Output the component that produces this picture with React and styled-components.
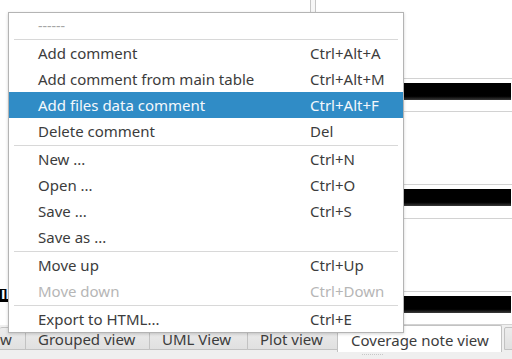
import React from "react";
import styled, { createGlobalStyle } from "styled-components";

const GlobalStyle = createGlobalStyle`
  html, body { margin: 0; padding: 0; background: #ffffff; }
  body { font-family: "Noto Sans", "Open Sans", sans-serif; color: #3c3c3c; }
  #root { width: 512px; height: 359px; overflow: hidden; }
`;

const Window = styled.div`
  position: relative;
  width: 512px;
  height: 359px;
  display: flex;
  flex-direction: column;
  background: #ffffff;
  overflow: hidden;
`;

const Main = styled.div`
  height: 325px;
  display: flex;
  background: #ffffff;
`;

const LeftPane = styled.div`
  width: 310px;
  display: flex;
  flex-direction: column;
  padding-top: 289px;
  box-sizing: border-box;
`;

const HeaderStrip = styled.div`
  height: 13px;
  background: #000;
  color: #fff;
  font-family: "DejaVu Sans", sans-serif;
  font-weight: bold;
  font-size: 12px;
  line-height: 13px;
  padding-left: 1px;
  white-space: nowrap;
  overflow: hidden;
`;

const Splitter = styled.div`
  width: 4px;
  border-left: 1px solid #c6c6c6;
  border-right: 1px solid #c6c6c6;
  background: #f7f7f7;
`;

const RightPane = styled.div`
  flex: 1;
  display: flex;
  flex-direction: column;
  gap: 72px;
  padding-top: 78px;
`;

const Block = styled.div`
  height: 30px;
  border-top: 1px solid #d2d2d2;
  border-bottom: 1px solid #d2d2d2;
  padding: 4px 1px 0 0;
  box-sizing: content-box;
`;

const BlackBar = styled.div`
  height: 17px;
  background: linear-gradient(to bottom, #000 0%, #000 78%, #3a3a3a 100%);
`;

const TabBar = styled.div`
  height: 34px;
  display: flex;
  align-items: flex-start;
  background: #efefef;
  position: relative;
`;

const Tab = styled.div`
  box-sizing: border-box;
  height: ${(p) => (p.$active ? "27px" : "23px")};
  margin-top: ${(p) => (p.$active ? "0" : "2px")};
  padding: ${(p) => (p.$active ? "2px 10px 0 13px" : "0 10px 0 12px")};
  display: flex;
  align-items: center;
  width: ${(p) => (p.$w ? `${p.$w}px` : "auto")};
  overflow: hidden;
  flex-shrink: 0;
  white-space: nowrap;
  font-size: 15px;
  color: #3c3c3c;
  background: ${(p) => (p.$active ? "#ffffff" : "linear-gradient(#ececec, #e0e0e0)")};
  border: 1px solid #c2c2c2;
  border-bottom: ${(p) => (p.$active ? "none" : "1px solid #c2c2c2")};
  margin-right: ${(p) => (p.$active ? "2px" : "-1px")};
  border-radius: 2px 2px 0 0;
`;

const ClippedTab = styled(Tab)`
  border-left: none;
  padding: 0 15px 0 0;
  justify-content: flex-end;
  direction: rtl;
`;

const Grip = styled.div`
  position: absolute;
  left: 362px;
  bottom: 3px;
  width: 21px;
  height: 1px;
  border-top: 1px dotted #c8c8c8;
`;

const Menu = styled.div`
  position: absolute;
  left: 8px;
  top: 12px;
  width: 396px;
  box-sizing: border-box;
  background: #ffffff;
  border: 1px solid #b4b4b4;
  box-shadow: 0 1px 3px rgba(0, 0, 0, 0.18);
  display: flex;
  flex-direction: column;
  z-index: 10;
`;

const Item = styled.div`
  height: ${(p) => (p.$title ? "25px" : "26px")};
  display: grid;
  grid-template-columns: 1fr 93px;
  align-items: center;
  padding-left: 29px;
  font-size: ${(p) => (p.$title ? "14px" : "15px")};
  white-space: nowrap;
  color: ${(p) =>
    p.$active ? "#f4f8fc" : p.$disabled ? "#b6b6b6" : p.$title ? "#a6a6a6" : "#3c3c3c"};
  background: ${(p) => (p.$active ? "#308cc6" : "transparent")};
`;

const Shortcut = styled.span``;

const Separator = styled.div`
  height: 1px;
  margin: 1px 5px 0 5px;
  background: #d8d8d8;
`;

const menu = [
  { label: "------", title: true },
  "sep",
  { label: "Add comment", sc: "Ctrl+Alt+A" },
  { label: "Add comment from main table", sc: "Ctrl+Alt+M" },
  { label: "Add files data comment", sc: "Ctrl+Alt+F", active: true },
  { label: "Delete comment", sc: "Del" },
  "sep",
  { label: "New ...", sc: "Ctrl+N" },
  { label: "Open ...", sc: "Ctrl+O" },
  { label: "Save ...", sc: "Ctrl+S" },
  { label: "Save as ..." },
  "sep",
  { label: "Move up", sc: "Ctrl+Up" },
  { label: "Move down", sc: "Ctrl+Down", disabled: true },
  "sep",
  { label: "Export to HTML...", sc: "Ctrl+E" },
];

const tabs = [
  { label: "Grouped view", w: 125 },
  { label: "UML View", w: 99 },
  { label: "Plot view", w: 91 },
  { label: "Coverage note view", w: 165, active: true },
  { label: "Settings" },
];

export default function App() {
  return (
    <>
      <GlobalStyle />
      <Window>
        <Main>
          <LeftPane>
            <HeaderStrip>Il</HeaderStrip>
          </LeftPane>
          <Splitter />
          <RightPane>
            <Block><BlackBar /></Block>
            <Block><BlackBar /></Block>
            <Block><BlackBar /></Block>
          </RightPane>
        </Main>
        <TabBar>
          <ClippedTab $w={26}>w</ClippedTab>
          {tabs.map((t) => (
            <Tab key={t.label} $active={t.active} $w={t.w}>
              {t.label}
            </Tab>
          ))}
          <Grip />
        </TabBar>
        <Menu>
          {menu.map((m, i) =>
            m === "sep" ? (
              <Separator key={i} />
            ) : (
              <Item key={i} $active={m.active} $disabled={m.disabled} $title={m.title}>
                <span>{m.label}</span>
                <Shortcut>{m.sc || ""}</Shortcut>
              </Item>
            )
          )}
        </Menu>
      </Window>
    </>
  );
}
